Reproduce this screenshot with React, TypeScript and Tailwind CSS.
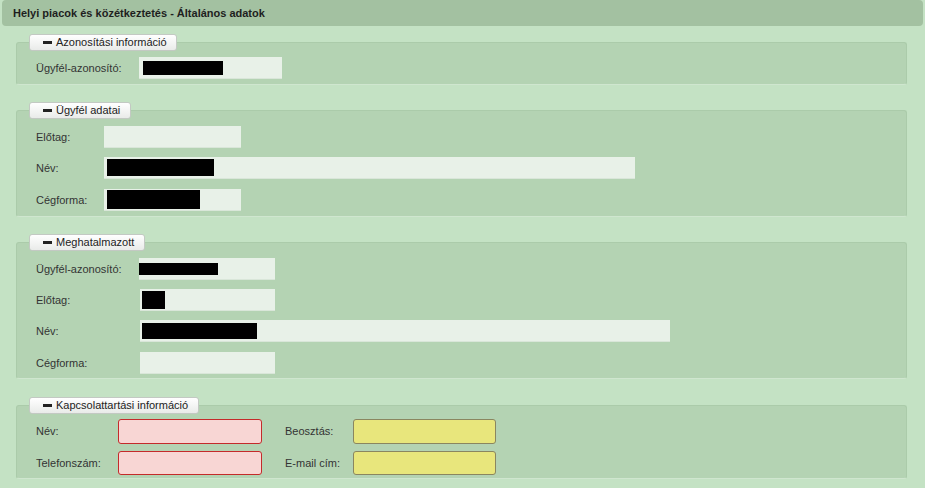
import React from "react";

const font = { fontFamily: '"Liberation Sans", Arial, sans-serif' };

function Legend({ title, width }: { title: string; width: string }) {
  return (
    <div
      className={`absolute left-[12px] top-[-9px] h-[17px] ${width} flex items-center rounded-[3px] border border-[#c3c9c3] bg-gradient-to-b from-[#ffffff] to-[#e9ebe9] pl-[13px] text-[11px] leading-none text-[#222]`}
    >
      <span className="mr-[4px] inline-block h-[3px] w-[9px] bg-[#222]" />
      <span>{title}</span>
    </div>
  );
}

function Field({ w, black, bx = "ml-[3px]", bh = "h-[14px]" }: { w: string; black?: string; bx?: string; bh?: string }) {
  return (
    <div className={`h-[22px] ${w} flex items-center bg-[#e8f1e8] border-b border-[#d9e6d9]`}>
      {black ? <div className={`${bx} ${bh} ${black} bg-black`} /> : null}
    </div>
  );
}

export default function App() {
  return (
    <div style={font} className="min-h-[488px] w-[925px] overflow-hidden bg-[#c4e2c4] text-[11px] text-[#333]">
      <div className="ml-[2px] flex h-[26px] w-[921px] items-center rounded-[4px] bg-[#a3c1a1] pl-[11px] text-[11px] font-bold text-[#1e1e1e]">
        Helyi piacok és közétkeztetés - Általános adatok
      </div>

      {/* Fieldset 1 */}
      <div className="relative ml-[16px] mt-[16px] h-[43px] w-[891px] rounded-[3px] border border-[#abcbaa] border-b-[#cfe6cf] bg-[#b4d3b3]">
        <Legend title="Azonosítási információ" width="w-[148px]" />
        <div className="flex pt-[14px] pl-[19px]">
          <div className="w-[103px] leading-[22px]">Ügyfél-azonosító:</div>
          <Field w="w-[143px]" black="w-[80px]" bx="ml-[4px]" />
        </div>
      </div>

      {/* Fieldset 2 */}
      <div className="relative ml-[16px] mt-[25px] h-[107px] w-[891px] rounded-[3px] border border-[#abcbaa] border-b-[#cfe6cf] bg-[#b4d3b3]">
        <Legend title="Ügyfél adatai" width="w-[102px]" />
        <div className="flex flex-col pt-[15px] pl-[19px]">
          <div className="flex">
            <div className="w-[68px] leading-[22px]">Előtag:</div>
            <Field w="w-[137px]" />
          </div>
          <div className="mt-[9px] flex">
            <div className="w-[68px] leading-[22px]">Név:</div>
            <Field w="w-[531px]" black="w-[107px]" bh="h-[17px]" />
          </div>
          <div className="mt-[10px] flex">
            <div className="w-[68px] leading-[22px]">Cégforma:</div>
            <Field w="w-[137px]" black="w-[93px]" bh="h-[19px]" />
          </div>
        </div>
      </div>

      {/* Fieldset 3 */}
      <div className="relative ml-[16px] mt-[25px] h-[137px] w-[891px] rounded-[3px] border border-[#abcbaa] border-b-[#cfe6cf] bg-[#b4d3b3]">
        <Legend title="Meghatalmazott" width="w-[116px]" />
        <div className="flex flex-col pt-[15px] pl-[19px]">
          <div className="flex">
            <div className="w-[103px] leading-[22px]">Ügyfél-azonosító:</div>
            <Field w="w-[136px]" black="w-[79px]" bx="ml-0" bh="h-[12px]" />
          </div>
          <div className="mt-[9px] flex">
            <div className="w-[104px] leading-[22px]">Előtag:</div>
            <Field w="w-[135px]" black="w-[23px]" bx="ml-[2px]" bh="h-[18px]" />
          </div>
          <div className="mt-[9px] flex">
            <div className="w-[104px] leading-[22px]">Név:</div>
            <Field w="w-[530px]" black="w-[115px]" bx="ml-[2px]" bh="h-[16px]" />
          </div>
          <div className="mt-[10px] flex">
            <div className="w-[104px] leading-[22px]">Cégforma:</div>
            <Field w="w-[135px]" />
          </div>
        </div>
      </div>

      {/* Fieldset 4 */}
      <div className="relative ml-[16px] mt-[26px] h-[74px] w-[891px] rounded-[3px] border border-[#abcbaa] border-b-[#cfe6cf] bg-[#b4d3b3]">
        <Legend title="Kapcsolattartási információ" width="w-[170px]" />
        <div className="flex flex-col pt-[13px] pl-[19px]">
          <div className="flex items-center">
            <div className="w-[82px]">Név:</div>
            <div className="h-[25px] w-[144px] rounded-[3px] border border-[#c42a2a] bg-[#f8d6d4]" />
            <div className="w-[68px] pl-[23px] box-content">Beosztás:</div>
            <div className="h-[25px] w-[143px] rounded-[3px] border border-[#8a8660] bg-[#e8e67c]" />
          </div>
          <div className="mt-[7px] flex items-center">
            <div className="w-[82px]">Telefonszám:</div>
            <div className="h-[24px] w-[144px] rounded-[3px] border border-[#c42a2a] bg-[#f8d6d4]" />
            <div className="w-[68px] pl-[23px] box-content">E-mail cím:</div>
            <div className="h-[24px] w-[143px] rounded-[3px] border border-[#8a8660] bg-[#e8e67c]" />
          </div>
        </div>
      </div>
    </div>
  );
}
